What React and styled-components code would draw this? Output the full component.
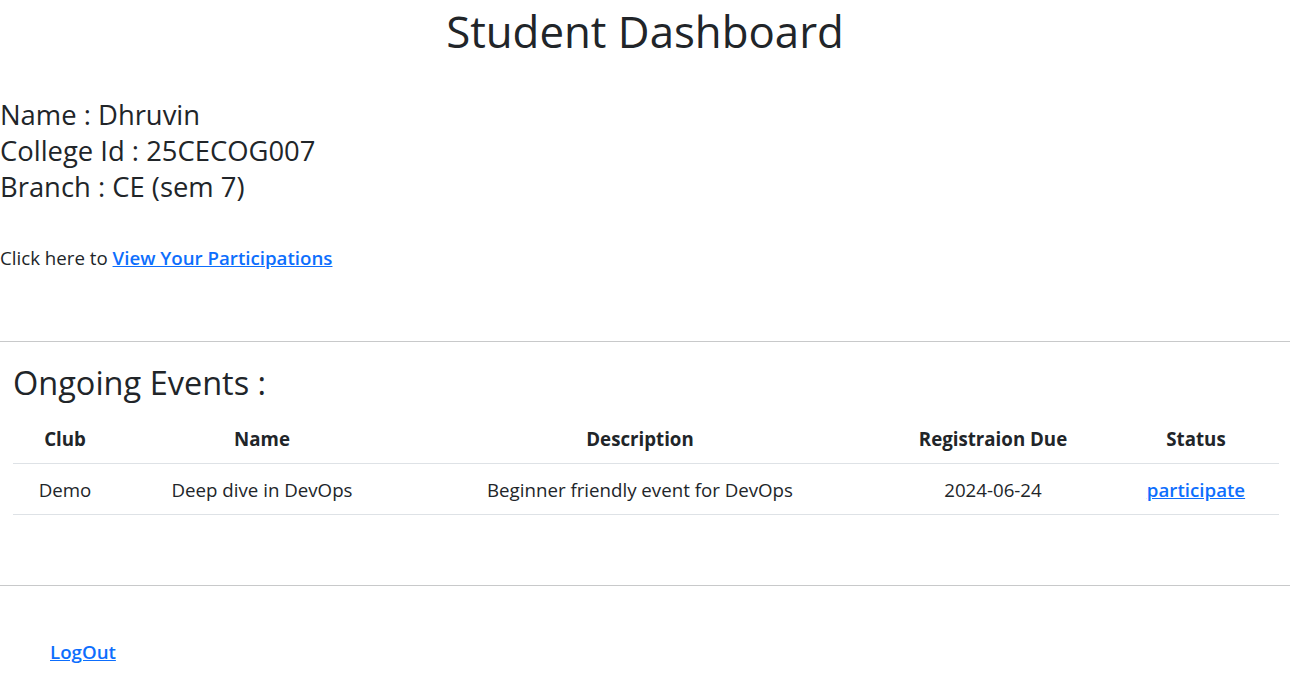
import React from "react";
import styled, { createGlobalStyle } from "styled-components";

const Global = createGlobalStyle`
  html, body { margin: 0; padding: 0; background: #fff; }
  body {
    font-family: "Open Sans", "Noto Sans", sans-serif;
    font-size: 18.7px;
    line-height: 30px;
    color: #212529;
  }
`;

const Page = styled.div`
  display: flex;
  flex-direction: column;
`;

const Title = styled.h1`
  margin: 3px 0 0;
  text-align: center;
  font-size: 43.8px;
  line-height: 56px;
  font-weight: 400;
`;

const Info = styled.div`
  margin-top: 38px;
  display: flex;
  flex-direction: column;
`;

const InfoLine = styled.div`
  font-size: 27.4px;
  line-height: 36px;
`;

const LinkLine = styled.p`
  margin: 38px 0 0;
`;

const Link = styled.a`
  color: #0d6efd;
  font-weight: 600;
  text-decoration: underline;
  cursor: pointer;
`;

const Rule = styled.hr`
  margin: ${(p) => p.$top}px 0 0;
  border: 0;
  border-top: 1px solid #c8c9ca;
  height: 0;
`;

const Section = styled.section`
  padding: 0 11px 0 13px;
`;

const SectionTitle = styled.h3`
  margin: 21px 0 0;
  font-size: 32.5px;
  line-height: 40px;
  font-weight: 400;
`;

const Table = styled.table`
  margin-top: 10px;
  width: 100%;
  border-collapse: collapse;
  table-layout: fixed;
`;

const Th = styled.th`
  width: ${(p) => p.$w}px;
  padding: 11px 10px 9px;
  height: 50px;
  box-sizing: border-box;
  font-weight: 700;
  text-align: center;
  border-bottom: 1px solid #dee2e6;
`;

const Td = styled.td`
  padding: 11px 10px 9px;
  height: 51px;
  box-sizing: border-box;
  text-align: center;
  border-bottom: 1px solid #dee2e6;
`;

const Footer = styled.div`
  padding: 51px 50px 0;
`;

const cols = [
  ["Club", 104],
  ["Name", 290],
  ["Description", 466],
  ["Registraion Due", 240],
  ["Status", 166],
];

export default function App() {
  return (
    <Page>
      <Global />
      <Title>Student Dashboard</Title>
      <Info>
        <InfoLine>Name : Dhruvin</InfoLine>
        <InfoLine>College Id : 25CECOG007</InfoLine>
        <InfoLine>Branch : CE (sem 7)</InfoLine>
      </Info>
      <LinkLine>
        Click here to <Link>View Your Participations</Link>
      </LinkLine>
      <Rule $top={68} />
      <Section>
        <SectionTitle>Ongoing Events :</SectionTitle>
        <Table>
          <thead>
            <tr>
              {cols.map(([c, w]) => (
                <Th key={c} $w={w}>
                  {c}
                </Th>
              ))}
            </tr>
          </thead>
          <tbody>
            <tr>
              <Td>Demo</Td>
              <Td>Deep dive in DevOps</Td>
              <Td>Beginner friendly event for DevOps</Td>
              <Td>2024-06-24</Td>
              <Td>
                <Link>participate</Link>
              </Td>
            </tr>
          </tbody>
        </Table>
      </Section>
      <Rule $top={70} />
      <Footer>
        <Link>LogOut</Link>
      </Footer>
    </Page>
  );
}
